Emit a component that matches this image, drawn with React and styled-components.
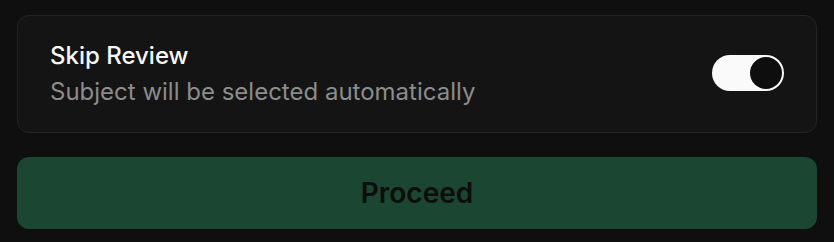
import React, { useState } from "react";
import styled, { createGlobalStyle } from "styled-components";

const Global = createGlobalStyle`
  html, body { margin: 0; padding: 0; background: #0f0f0f; }
  body { font-family: Inter, "Noto Sans", sans-serif; -webkit-font-smoothing: antialiased; }
  * { box-sizing: border-box; }
`;

const Page = styled.div`
  width: 800px;
  margin: 15px 17px;
  display: flex;
  flex-direction: column;
  gap: 24px;
`;

const Card = styled.div`
  height: 118px;
  background: #141414;
  border: 1px solid #232323;
  border-radius: 12px;
  padding: 0 32px;
  display: flex;
  align-items: center;
  justify-content: space-between;
`;

const Texts = styled.div`
  display: flex;
  flex-direction: column;
  gap: 4px;
`;

const Title = styled.div`
  font-size: 24px;
  line-height: 32px;
  font-weight: 500;
  color: #f7f7f7;
`;

const Sub = styled.div`
  font-size: 24px;
  line-height: 32px;
  font-weight: 400;
  color: #8c8c8c;
`;

const Track = styled.button`
  width: 72px;
  height: 36px;
  border-radius: 18px;
  border: none;
  padding: 2px;
  margin-top: -3px;
  background: #fafafa;
  display: flex;
  justify-content: ${(p) => (p.$on ? "flex-end" : "flex-start")};
  cursor: pointer;
`;

const Knob = styled.span`
  width: 32px;
  height: 32px;
  border-radius: 50%;
  background: #0e0e0e;
`;

const Proceed = styled.button`
  height: 72px;
  border: none;
  border-radius: 12px;
  background: #1b4631;
  color: #0d0d0d;
  font-family: Inter, "Noto Sans", sans-serif;
  font-size: 28px;
  font-weight: 600;
  cursor: pointer;
`;

export default function App() {
  const [on, setOn] = useState(true);
  return (
    <>
      <Global />
      <Page>
        <Card>
          <Texts>
            <Title>Skip Review</Title>
            <Sub>Subject will be selected automatically</Sub>
          </Texts>
          <Track $on={on} onClick={() => setOn(!on)} aria-label="Skip Review">
            <Knob />
          </Track>
        </Card>
        <Proceed>Proceed</Proceed>
      </Page>
    </>
  );
}
